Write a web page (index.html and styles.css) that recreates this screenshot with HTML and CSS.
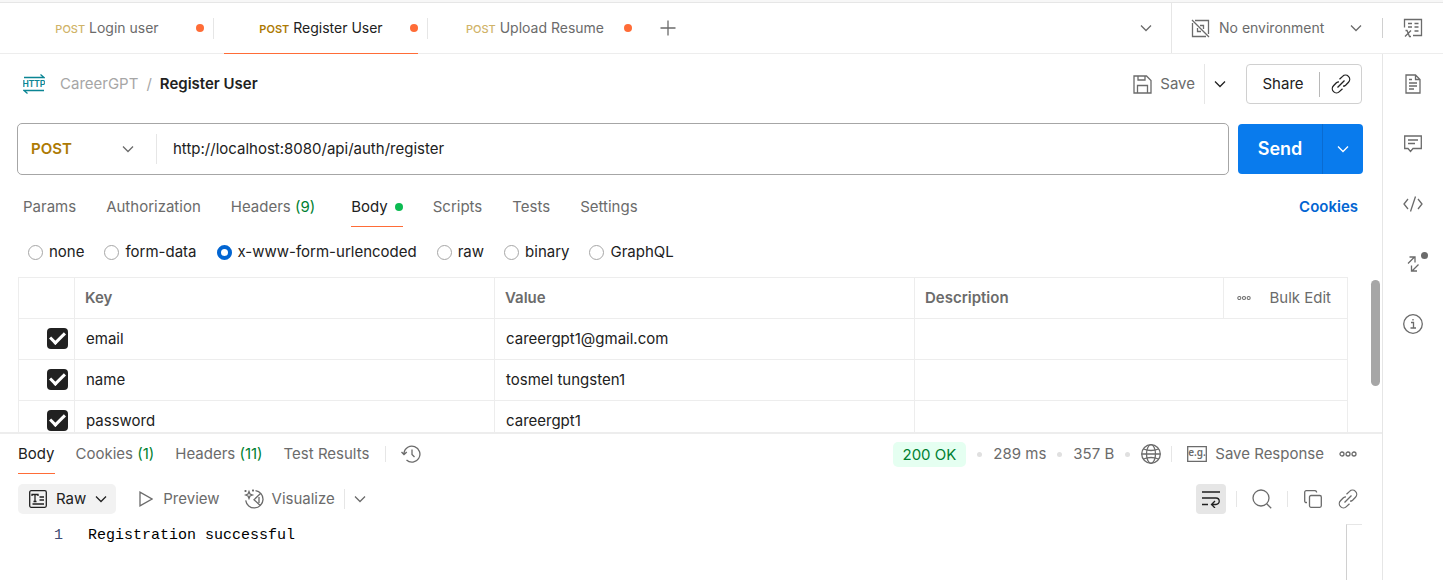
FILE: index.html
```
<!DOCTYPE html>
<html lang="en">
<head>
<meta charset="utf-8">
<title>Register User</title>
<link rel="stylesheet" href="styles.css">
</head>
<body>
<svg class="defs" aria-hidden="true">
  <symbol id="chevron" viewBox="0 0 12 12"><path d="M1 3.500 6 8.500 11 3.500"/></symbol>
  <symbol id="link" viewBox="0 0 20 20"><path d="M8.500 5.200 11.600 2.400a4.100 4.100 0 0 1 5.900 5.800L14.600 11.200a3.800 3.800 0 0 1-2.600 1M11.500 14.800 8.400 17.600a4.100 4.100 0 0 1-5.900-5.800L5.400 8.800A3.800 3.800 0 0 1 8 7.800M6.500 13.500 13.500 6.500"/></symbol>
  <symbol id="dots" viewBox="0 0 18 6"><circle cx="3" cy="3" r="2"/><circle cx="9" cy="3" r="2"/><circle cx="15" cy="3" r="2"/></symbol>
</svg>
<header class="tabbar">
  <nav class="tabs" aria-label="Open requests">
    <button class="tab"><span class="tab-label"><span class="verb">POST</span> Login user</span><i class="unsaved"></i></button>
    <button class="tab active"><span class="tab-label"><span class="verb">POST</span> Register User</span><i class="unsaved"></i></button>
    <button class="tab"><span class="tab-label"><span class="verb">POST</span> Upload Resume</span><i class="unsaved"></i></button>
  </nav>
  <button class="icon-btn new-tab" aria-label="New tab"><svg width="16" height="16" viewBox="0 0 16 16"><path d="M8 .5v15M.5 8h15"/></svg></button>
  <button class="icon-btn tab-list" aria-label="Tab list"><svg width="12" height="12"><use href="#chevron"/></svg></button>
  <button class="env">
    <svg width="19" height="19" viewBox="0 0 19 19"><path d="M4 1.500h13.500V15M1.500 4v13.500H15M1 1l17 17M9 6.500h3.500V10M6.500 9v3.500H10"/></svg>
    <span>No environment</span>
    <svg class="env-chevron" width="12" height="12"><use href="#chevron"/></svg>
  </button>
  <button class="icon-btn variables" aria-label="Variables"><svg width="20" height="20" viewBox="0 0 20 20"><path d="M1.500 9.500v-8h17v16H10M5 5.500h4M11.500 5.500h4M5 9h4M11.500 9h4M11.500 13h4"/><path d="M2.500 12.500H4l2.500 6H8M8 12.500 2 18.500"/></svg></button>
</header>
<div class="workspace">
<main class="content">
  <section class="request">
    <div class="title-row">
      <svg class="http" width="22" height="20" viewBox="0 0 22 20"><path d="M1 3.500h20L17.500.500M21 16.500H1l3.500 3"/><text x="11" y="13" text-anchor="middle">HTTP</text></svg>
      <div class="crumbs"><a href="#">CareerGPT</a><span>/</span><h1>Register User</h1></div>
      <button class="save"><svg width="19" height="19" viewBox="0 0 19 19"><path d="M1 1h12.500L18 5.500V18H1zM5 1v4h7V1M4.500 18v-7.500h10V18"/></svg><span>Save</span></button>
      <button class="save-more" aria-label="Save options"><svg width="12" height="12"><use href="#chevron"/></svg></button>
      <div class="share">
        <button class="share-btn">Share</button>
        <button class="share-link" aria-label="Copy link"><svg width="20" height="20"><use href="#link"/></svg></button>
      </div>
    </div>
    <div class="url-row">
      <div class="url-box">
        <div class="method"><select aria-label="Method"><option>POST</option></select><svg width="12" height="12"><use href="#chevron"/></svg></div>
        <input type="text" aria-label="Request URL" value="http://localhost:8080/api/auth/register">
      </div>
      <div class="send"><button class="send-btn">Send</button><button class="send-more" aria-label="Send options"><svg width="12" height="12"><use href="#chevron"/></svg></button></div>
    </div>
    <nav class="section-tabs" aria-label="Request sections">
      <button>Params</button><button>Authorization</button><button class="with-count">Headers <span class="count">(9)</span></button><button class="active">Body<i class="has-body"></i></button><button>Scripts</button><button>Tests</button><button>Settings</button>
      <a class="cookies" href="#">Cookies</a>
    </nav>
    <div class="body-types" role="radiogroup" aria-label="Body type">
      <label><input type="radio" name="type">none</label>
      <label><input type="radio" name="type">form-data</label>
      <label><input type="radio" name="type" checked>x-www-form-urlencoded</label>
      <label><input type="radio" name="type">raw</label>
      <label><input type="radio" name="type">binary</label>
      <label><input type="radio" name="type">GraphQL</label>
    </div>
    <div class="params">
      <table>
        <colgroup><col class="c-check"><col class="c-text"><col class="c-text"><col><col class="c-bulk"></colgroup>
        <thead><tr><th></th><th>Key</th><th>Value</th><th>Description</th><th><div class="bulk"><button class="icon-btn" aria-label="More"><svg width="14" height="6"><use href="#dots"/></svg></button><button>Bulk Edit</button></div></th></tr></thead>
        <tbody>
          <tr><td class="check"><input type="checkbox" aria-label="email" checked></td><td>email</td><td>careergpt1@gmail.com</td><td colspan="2"></td></tr>
          <tr><td class="check"><input type="checkbox" aria-label="name" checked></td><td>name</td><td>tosmel tungsten1</td><td colspan="2"></td></tr>
          <tr><td class="check"><input type="checkbox" aria-label="password" checked></td><td>password</td><td>careergpt1</td><td colspan="2"></td></tr>
        </tbody>
      </table>
      <div class="thumb"></div>
    </div>
  </section>
  <section class="response">
    <div class="res-head">
      <nav class="res-tabs" aria-label="Response sections">
        <button class="active">Body</button><button>Cookies <span class="count">(1)</span></button><button>Headers <span class="count">(11)</span></button><button>Test Results</button>
      </nav>
      <button class="icon-btn history" aria-label="History"><svg width="20" height="20" viewBox="0 0 20 20"><path d="M3 10.500V9a8 8 0 1 1 2.500 7M.500 8 3 10.500 5.800 8M11 5.500v5l2.500 2.500"/></svg></button>
      <div class="status">
        <span class="ok">200 OK</span><i></i><span>289 ms</span><i></i><span>357 B</span><i></i>
        <svg width="20" height="20" viewBox="0 0 20 20"><circle cx="10" cy="10" r="9.300"/><ellipse cx="10" cy="10" rx="4.500" ry="9.300"/><path d="M2.500 5q7.500 3 15 0M2.500 15q7.500-3 15 0M.700 10h18.600"/></svg>
      </div>
      <button class="save-res"><svg width="20" height="16" viewBox="0 0 20 16"><path d="M.700.700h18.600v14.600H.700z"/><text x="10" y="10" text-anchor="middle">e.g.</text></svg><span>Save Response</span></button>
      <button class="icon-btn" aria-label="More"><svg width="18" height="6"><use href="#dots"/></svg></button>
    </div>
    <div class="tools">
      <button class="raw"><svg width="18" height="18" viewBox="0 0 18 18"><rect x=".7" y=".7" width="16.600" height="16.600" rx="1.500"/><path d="M3 6V4.500h6V6M6 4.500V11M4.500 11.500h3M10.500 7h4.500M10.500 10h4.500M3.500 14h11.500"/></svg><span>Raw</span><svg width="12" height="12"><use href="#chevron"/></svg></button>
      <button class="preview"><svg width="14" height="16" viewBox="0 0 14 16"><path d="M1 1.200v13.600L13 8z"/></svg><span>Preview</span></button>
      <button class="visualize"><svg width="20" height="20" viewBox="0 0 20 20"><path d="M11.500 1.600a8.700 8.700 0 1 1-9.800 9.800M16.500 4.500 10 10.700l6.500 6M15 8v6M5 2.500l1 2.500 2.500 1L6 7 5 9.500 4 7 1.500 6 4 5zM1.500 1v2M.500 2h2M9 .500v2M8 1.500h2"/></svg><span>Visualize</span></button>
      <button class="icon-btn vis-more" aria-label="Visualize options"><svg width="12" height="12"><use href="#chevron"/></svg></button>
      <button class="icon-btn wrap" aria-label="Wrap lines"><svg width="18" height="18" viewBox="0 0 18 18"><path d="M0 2h18M0 8h14a3.200 3.200 0 0 1 0 6.500h-4M0 14.500h6M13 11l-3.500 3.500L13 18"/></svg></button>
      <button class="icon-btn search" aria-label="Search"><svg width="20" height="20" viewBox="0 0 20 20"><circle cx="9" cy="9" r="8"/><path d="m14.700 14.700 4.500 4.500"/></svg></button>
      <button class="icon-btn copy" aria-label="Copy"><svg width="18" height="18" viewBox="0 0 18 18"><path d="M3 12.500H2.500A1.500 1.500 0 0 1 .700 11V2.200A1.500 1.500 0 0 1 2.200.700H11A1.500 1.500 0 0 1 12.500 2.500"/><rect x="5.500" y="5.500" width="11.800" height="11.800" rx="1.500"/></svg></button>
      <button class="icon-btn" aria-label="Copy link"><svg width="20" height="20"><use href="#link"/></svg></button>
    </div>
    <div class="code"><span class="line-no">1</span><code>Registration successful</code><div class="ruler"></div></div>
  </section>
</main>
<aside class="rail">
  <button class="icon-btn" aria-label="Documentation"><svg width="16" height="20" viewBox="0 0 16 20"><path d="M1 1h9.500L15 5.500V19H1zM10.500 1v4.500H15M4 5.500h3M4 9h8M4 12h8M4 15h5"/></svg></button>
  <button class="icon-btn" aria-label="Comments"><svg width="18" height="18" viewBox="0 0 18 18"><path d="M.700 1h16.600v12.500H9L6.500 16.500 4 13.500H.700zM4 5h10M4 8.500h7"/></svg></button>
  <button class="icon-btn" aria-label="Code"><svg width="20" height="16" viewBox="0 0 20 16"><path d="M5 3 1 8l4 5M15 3l4 5-4 5M12.500.500l-5 15"/></svg></button>
  <button class="icon-btn related" aria-label="Related requests"><svg width="12" height="16" viewBox="0 0 12 16"><path d="M1 7.500 7.500 1M2.500 1h5.500v5.500M11.500 8.500 5 15M4.500 9.500V15H10"/></svg></button>
  <button class="icon-btn" aria-label="Info"><svg width="20" height="20" viewBox="0 0 20 20"><circle cx="10" cy="10" r="9.300"/><path d="M8 8.500h2.500V14M7.500 14h5.500M10 5v1.500"/></svg></button>
</aside>
</div>
</body>
</html>
```
FILE: styles.css
```
* { box-sizing: border-box; }
body {
  margin: 0; min-height: 100vh; display: flex; flex-direction: column;
  border-top: 2px solid #f7f7f7;
  font: 15px/20px Inter, "Liberation Sans", sans-serif; color: #212121; background: #fff;
}
button, input, select { font: inherit; color: inherit; }
button { padding: 0; border: 0; background: none; white-space: nowrap; }
svg { fill: none; stroke: currentColor; stroke-width: 1.3; flex: none; display: block; }
svg text { fill: currentColor; stroke: none; }
.defs { width: 0; height: 0; position: absolute; }
a { text-decoration: none; color: inherit; }
.icon-btn { display: flex; align-items: center; justify-content: center; color: #6b6b6b; }

.tabbar { display: flex; align-items: center; height: 52px; border-top: 1px solid #e6e6e6; border-bottom: 1px solid #ededed; color: #6b6b6b; font-size: 14px; }
.tabs { display: flex; align-self: stretch; }
.tab { position: relative; width: 214px; display: grid; grid-template-columns: 1fr auto 1fr; align-items: center; padding: 0 10px; }
.tab-label { grid-column: 2; }
.tab:not(:last-child)::before { content: ""; position: absolute; right: 0; top: 15px; height: 21px; border-right: 1px solid #e6e6e6; }
.tab.active { color: #212121; }
.tab.active::after { content: ""; position: absolute; left: 10px; right: 10px; bottom: -1px; height: 1px; background: #ff6c37; }
.verb { font-size: 11px; font-weight: 500; color: #d0b368; }
.active .verb { color: #ad7a03; font-weight: 600; }
.unsaved { width: 8px; height: 8px; border-radius: 50%; background: #ff6c37; justify-self: end; }
.new-tab { margin-left: 18px; }
.tab-list { margin-left: auto; width: 50px; }
.env { display: flex; align-items: center; gap: 9px; align-self: stretch; border-left: 1px solid #e6e6e6; padding: 0 20px 0 19px; width: 211px; text-align: left; }
.env-chevron { margin-left: auto; }
.variables { width: 61px; height: 20px; border-left: 1px solid #d0d0d0; }

.workspace { flex: 1; display: flex; }
.content { flex: 1; min-width: 0; display: flex; flex-direction: column; }
.rail { width: 61px; border-left: 1px solid #e6e6e6; display: flex; flex-direction: column; gap: 20px; padding-top: 10px; }
.rail .icon-btn { height: 40px; }
.related { position: relative; }
.related::after { content: ""; position: absolute; right: 15px; top: 8px; width: 7px; height: 7px; border-radius: 50%; background: #6b6b6b; }

.title-row { display: flex; align-items: center; padding: 10px 20px 0 23px; height: 50px; }
.http { color: #0b8594; margin-right: 15px; }
.http text { font: 600 9px Roboto, sans-serif; }
.crumbs { flex: 1; display: flex; gap: 8px; color: #a6a6a6; }
h1 { margin: 0; font-size: 15px; font-weight: 600; line-height: 20px; color: #212121; }
.save { display: flex; align-items: center; gap: 8px; color: #6b6b6b; }
.save-more { margin-left: 9px; width: 31px; height: 40px; border-left: 1px solid #e6e6e6; display: flex; align-items: center; justify-content: center; }
.share { display: flex; align-items: center; margin-left: 11px; height: 40px; border: 1px solid #d0d0d0; border-radius: 4px; }
.share-btn { width: 72px; }
.share-link { width: 42px; height: 25px; border-left: 1px solid #b8b8b8; display: flex; align-items: center; justify-content: center; }

.url-row { display: flex; align-items: center; gap: 9px; padding: 19px 19px 0 17px; }
.url-box { flex: 1; height: 52px; border: 1px solid #a6a6a6; border-radius: 5px; display: flex; align-items: center; }
.method { position: relative; width: 139px; height: 30px; border-right: 1px solid #e6e6e6; color: #6b6b6b; }
.method select { appearance: none; width: 100%; height: 100%; padding: 0 13px; border: 0; background: none; color: #ad7a03; font-weight: 600; }
.method svg { position: absolute; right: 22px; top: 9px; pointer-events: none; }
.url-box input { flex: 1; border: 0; padding: 0 16px; background: none; }
.send { display: flex; height: 50px; border-radius: 4px; overflow: hidden; background: #097bed; color: #fff; }
.send-btn { width: 84px; font-size: 18px; font-weight: 600; }
.send-more { width: 41px; border-left: 1px solid #0a6bd0; display: flex; align-items: center; justify-content: center; }

.section-tabs { display: flex; gap: 30px; padding: 12px 24px 0 23px; color: #6b6b6b; }
.section-tabs button { height: 40px; border-bottom: 1px solid transparent; }
.section-tabs .with-count { margin-right: 6px; }
.section-tabs .active, .res-tabs .active { color: #212121; border-bottom-color: #ff6c37; }
.section-tabs .active { display: flex; align-items: center; gap: 7px; }
.has-body { width: 8px; height: 8px; border-radius: 50%; background: #0cbb52; }
.count { color: #007f31; }
.cookies { margin-left: auto; align-self: center; color: #0265d2; font-weight: 600; }

.body-types { display: flex; gap: 20px; padding: 15px 28px; }
.body-types label { display: flex; align-items: center; gap: 6px; }
.body-types input { appearance: none; width: 15px; height: 15px; margin: 0; border: 1px solid #a6a6a6; border-radius: 50%; }
.body-types input:checked { border: 4px solid #0265d2; }

.params { height: 155px; overflow: hidden; display: flex; align-items: flex-start; padding-left: 18px; }
table { flex: 1; table-layout: fixed; border-collapse: collapse; }
.c-check { width: 56px; }
.c-text { width: 420px; }
.c-bulk { width: 124px; }
th, td { height: 41px; padding: 0 11px; border: 1px solid #ededed; text-align: left; font-weight: 400; }
th { padding: 0 10px; color: #6b6b6b; font-weight: 600; }
.check { padding: 0 6px 1px 5px; }
.check input { appearance: none; display: block; width: 21px; height: 21px; margin: 0 0 0 auto; border-radius: 4px; background: #212121; }
.check input::after { content: ""; display: block; box-sizing: border-box; width: 15px; height: 9px; margin: 4px 0 0 3px; border: solid #fff; border-width: 0 0 3px 3px; transform: rotate(-45deg); }
.bulk { display: flex; justify-content: space-between; padding: 0 6px 0 3px; font-weight: 400; }
.thumb { width: 9px; height: 106px; margin: 3px 2px 0 23px; border-radius: 5px; background: #a6a6a6; }

.response { flex: 1; display: flex; flex-direction: column; border-top: 2px solid #ededed; }
.res-head { display: flex; align-items: center; height: 40px; padding: 0 25px 0 18px; color: #6b6b6b; }
.res-tabs { display: flex; gap: 21px; align-self: stretch; }
.res-tabs button { border-bottom: 1px solid transparent; }
.history { margin-left: 16px; padding-left: 15px; border-left: 1px solid #e6e6e6; height: 16px; }
.status { display: flex; align-items: center; gap: 11px; margin-left: auto; }
.status i { width: 5px; height: 5px; border-radius: 50%; background: #e0e0e0; }
.ok { padding: 3px 10px; border-radius: 5px; background: #e5fff1; color: #007f31; line-height: 19px; }
.save-res { display: flex; align-items: center; gap: 8px; height: 16px; margin: 0 15px 0 10px; padding-left: 15px; border-left: 1px solid #e6e6e6; }
.save-res text { font: 600 10px "Noto Sans", sans-serif; }

.tools { display: flex; align-items: center; height: 50px; padding: 0 24px 0 18px; color: #6b6b6b; }
.raw { display: flex; align-items: center; gap: 9px; height: 30px; padding: 0 9px 0 11px; border-radius: 5px; background: #f2f2f2; color: #212121; }
.preview { display: flex; align-items: center; gap: 10px; margin-left: 23px; }
.visualize { display: flex; align-items: center; gap: 8px; margin-left: 24px; }
.vis-more { margin-left: 9px; padding-left: 9px; height: 20px; border-left: 1px solid #e6e6e6; }
.wrap { width: 30px; height: 30px; margin-left: auto; border-radius: 4px; background: #e6e6e6; color: #212121; }
.search { margin-left: 10px; padding: 0 15px; height: 16px; border: solid #e6e6e6; border-width: 0 1px; }
.copy { margin: 0 16px; }

.code { flex: 1; display: flex; padding-right: 20px; font: 15px/24px "Liberation Mono", monospace; color: #000; }
.line-no { width: 88px; padding-right: 25px; text-align: right; color: #404b74; }
code { flex: 1; font: inherit; }
.ruler { width: 16px; border-left: 1px solid #d0d0d0; border-top: 1px solid #e6e6e6; }
```
